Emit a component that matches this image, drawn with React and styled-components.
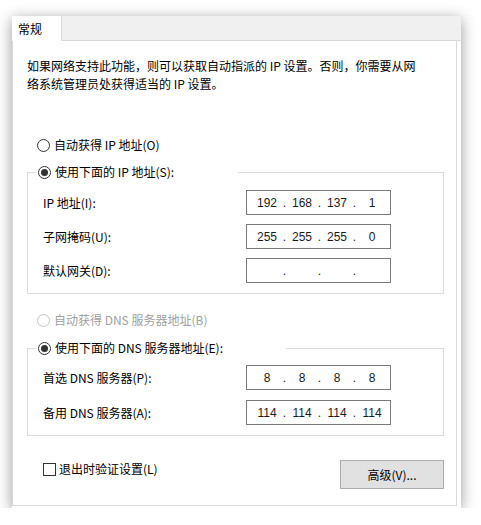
import React from "react";
import styled, { createGlobalStyle } from "styled-components";

const GlobalStyle = createGlobalStyle`
  body {
    margin: 0;
    background: #ffffff;
    font-family: "Noto Sans CJK SC", sans-serif;
    font-size: 12px;
    color: #000000;
  }
`;

const Window = styled.div`
  margin: 16px 0 0 12px;
  width: 449px;
  background: #ffffff;
  box-shadow: 0 3px 14px rgba(0, 0, 0, 0.4);
  padding-bottom: 2px;
`;

const TabStrip = styled.div`
  height: 24px;
  background: #f0f0f0;
  border-bottom: 1px solid #d9d9d9;
  display: flex;
`;

const Tab = styled.div`
  width: 43px;
  height: 25px;
  padding-left: 6px;
  background: #ffffff;
  border-right: 1px solid #d9d9d9;
  display: flex;
  align-items: center;
  line-height: 18px;
`;

const Panel = styled.div`
  margin-right: 4px;
  border: 1px solid #d9d9d9;
  border-top: none;
  padding: 16px 12px 16px 14px;
`;

const Description = styled.p`
  margin: 0;
  line-height: 18px;
  width: 400px;
`;

const RadioRow = styled.label`
  display: flex;
  align-items: center;
  height: 18px;
  line-height: 18px;
  margin-top: ${(p) => p.$top}px;
  margin-left: 10px;
  color: ${(p) => (p.$disabled ? "#a0a0a0" : "#000000")};
`;

const RadioCircle = styled.span`
  box-sizing: border-box;
  width: 13px;
  height: 13px;
  border-radius: 50%;
  border: 1px solid ${(p) => (p.$disabled ? "#c4c4c4" : "#333333")};
  background: #ffffff;
  margin-right: 4px;
  display: flex;
  align-items: center;
  justify-content: center;

  &::after {
    content: "";
    display: ${(p) => (p.$checked ? "block" : "none")};
    width: 7px;
    height: 7px;
    border-radius: 50%;
    background: #333333;
  }
`;

const Group = styled.fieldset`
  margin: ${(p) => p.$top}px 0 0 0;
  border: 1px solid #dcdcdc;
  padding: ${(p) => p.$padTop}px 52px 10px 15px;
  display: grid;
  grid-template-columns: 203px 145px;
  row-gap: ${(p) => p.$gap}px;
  align-items: center;
`;

const Legend = styled.legend`
  width: ${(p) => p.$width}px;
  padding: 0;
  margin-left: -7px;
  background: #ffffff;
`;

const LegendRadio = styled(RadioRow)`
  margin: 0 0 0 2px;
`;

const FieldLabel = styled.span`
  line-height: 18px;
`;

const IpBox = styled.div`
  box-sizing: border-box;
  width: 145px;
  height: 25px;
  border: 1px solid #7a7a7a;
  background: #ffffff;
  display: flex;
  align-items: center;
  padding-left: 7px;
  font-family: "Liberation Sans", Arial, sans-serif;
  font-size: 12px;
  color: #1a1a1a;
`;

const Octet = styled.span`
  width: 26px;
  text-align: center;
`;

const Dot = styled.span`
  width: 9px;
  text-align: center;
`;

const Footer = styled.div`
  margin-top: 24px;
  display: flex;
  justify-content: space-between;
  align-items: flex-start;
`;

const CheckRow = styled.label`
  display: flex;
  align-items: center;
  height: 18px;
  line-height: 18px;
  margin-left: 16px;
`;

const CheckBox = styled.span`
  box-sizing: border-box;
  width: 13px;
  height: 13px;
  border: 1px solid #333333;
  background: #ffffff;
  margin-right: 3px;
`;

const Button = styled.button`
  box-sizing: border-box;
  width: 104px;
  height: 29px;
  background: #e1e1e1;
  border: 1px solid #adadad;
  font-family: "Noto Sans CJK SC", sans-serif;
  font-size: 12px;
  color: #000000;
  padding: 0;
`;

const IpField = ({ parts }) => (
  <IpBox>
    {parts.map((p, i) => (
      <React.Fragment key={i}>
        {i > 0 && <Dot>.</Dot>}
        <Octet>{p}</Octet>
      </React.Fragment>
    ))}
  </IpBox>
);

const Radio = ({ checked, disabled }) => (
  <RadioCircle $checked={checked} $disabled={disabled} />
);

export default function App() {
  return (
    <>
      <GlobalStyle />
      <Window>
        <TabStrip>
          <Tab>常规</Tab>
        </TabStrip>
        <Panel>
          <Description>
            如果网络支持此功能，则可以获取自动指派的 IP 设置。否则，你需要从网络系统管理员处获得适当的 IP 设置。
          </Description>

          <RadioRow $top={43}>
            <Radio />
            自动获得 IP 地址(O)
          </RadioRow>

          <Group $top={9} $padTop={9} $gap={9}>
            <Legend $width={202}>
              <LegendRadio>
                <Radio checked />
                使用下面的 IP 地址(S):
              </LegendRadio>
            </Legend>
            <FieldLabel>IP 地址(I):</FieldLabel>
            <IpField parts={["192", "168", "137", "1"]} />
            <FieldLabel>子网掩码(U):</FieldLabel>
            <IpField parts={["255", "255", "255", "0"]} />
            <FieldLabel>默认网关(D):</FieldLabel>
            <IpField parts={["", "", "", ""]} />
          </Group>

          <RadioRow $top={17} $disabled>
            <Radio disabled />
            自动获得 DNS 服务器地址(B)
          </RadioRow>

          <Group $top={10} $padTop={8} $gap={10}>
            <Legend $width={250}>
              <LegendRadio>
                <Radio checked />
                使用下面的 DNS 服务器地址(E):
              </LegendRadio>
            </Legend>
            <FieldLabel>首选 DNS 服务器(P):</FieldLabel>
            <IpField parts={["8", "8", "8", "8"]} />
            <FieldLabel>备用 DNS 服务器(A):</FieldLabel>
            <IpField parts={["114", "114", "114", "114"]} />
          </Group>

          <Footer>
            <CheckRow>
              <CheckBox />
              退出时验证设置(L)
            </CheckRow>
            <Button>高级(V)...</Button>
          </Footer>
        </Panel>
      </Window>
    </>
  );
}
